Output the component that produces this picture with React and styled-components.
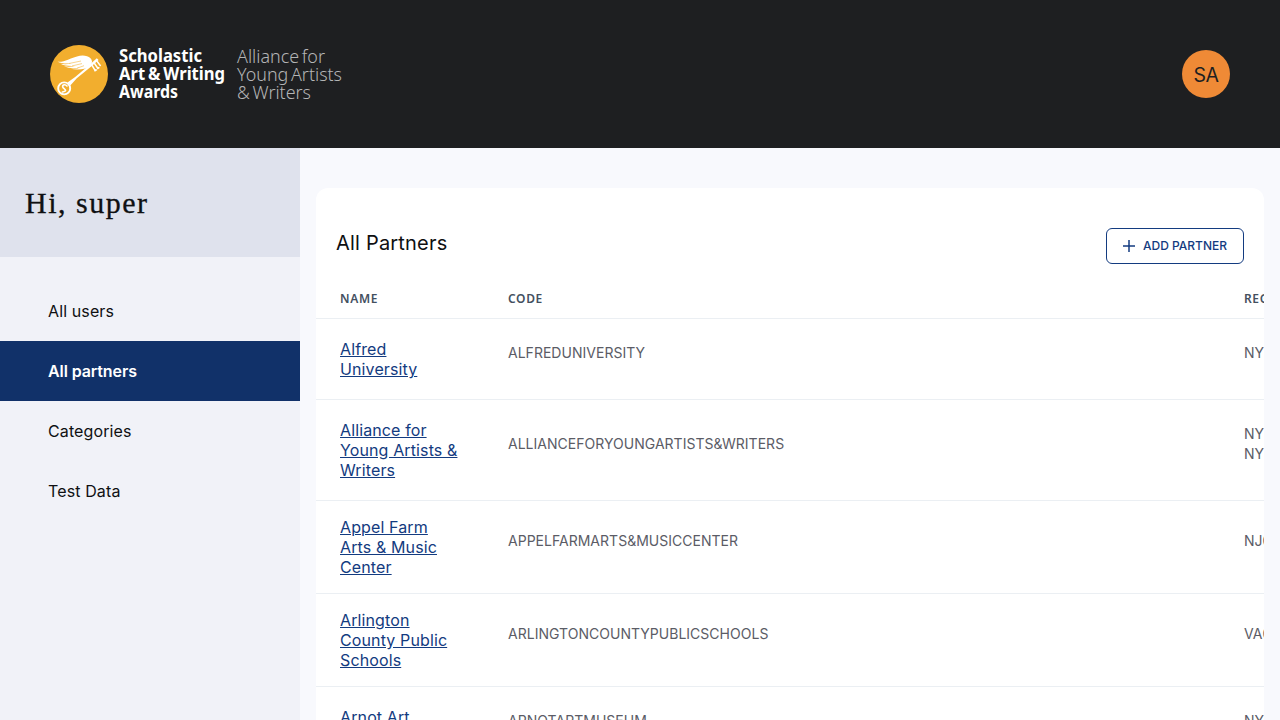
import React from 'react';
import styled, { createGlobalStyle } from 'styled-components';

const Global = createGlobalStyle`
  *, *::before, *::after { box-sizing: border-box; }
  html, body { margin: 0; height: 100%; overflow: hidden; background: #f8f9fd; }
  body { font-family: Inter, "Liberation Sans", sans-serif; color: #0f1012; }
`;

const Page = styled.div`
  height: 100vh;
  display: flex;
  flex-direction: column;
  overflow: hidden;
`;
const Header = styled.header`
  flex: 0 0 148px;
  display: flex;
  align-items: center;
  justify-content: space-between;
  padding: 0 50px;
  background: #1e1f21;
`;
const LogoArt = styled.svg`
  display: block;
`;
const Avatar = styled.div`
  width: 48px;
  height: 48px;
  border-radius: 50%;
  display: flex;
  align-items: center;
  justify-content: center;
  background: #ef8a36;
  color: #1e1f21;
  font-size: 19.5px;
  line-height: 20px;
  letter-spacing: -0.4px;
  padding-top: 1px;
`;
const Body = styled.div`
  flex: 1;
  min-height: 0;
  display: flex;
`;
const Sidebar = styled.aside`
  flex: 0 0 300px;
  background: #f1f2f8;
`;
const Greeting = styled.h1`
  margin: 0;
  height: 109px;
  padding: 1px 25px 0;
  display: flex;
  align-items: center;
  background: #dfe2ed;
  font-family: "Liberation Serif", serif;
  font-weight: 400;
  font-size: 30px;
  letter-spacing: 1.5px;
  -webkit-text-stroke: 0.3px #0f1012;
`;
const Nav = styled.nav`
  display: flex;
  flex-direction: column;
  padding-top: 24px;
`;
const NavItem = styled.a`
  height: 60px;
  padding-left: 48px;
  display: flex;
  align-items: center;
  font-size: 16px;
  letter-spacing: ${(p) => (p.$active ? '-0.1px' : '0.12px')};
  font-weight: ${(p) => (p.$active ? 600 : 400)};
  color: ${(p) => (p.$active ? '#fff' : '#0f1012')};
  background: ${(p) => (p.$active ? '#113169' : 'transparent')};
`;
const Main = styled.main`
  flex: 1;
  min-width: 0;
  padding: 40px 16px 0;
`;
const Card = styled.section`
  height: 100%;
  padding-top: 40px;
  border-radius: 12px 12px 0 0;
  background: #fff;
  overflow: hidden;
`;
const CardHead = styled.div`
  display: flex;
  justify-content: space-between;
  align-items: flex-start;
  height: 50px;
  padding: 0 20px;
`;
const Title = styled.h2`
  margin: 0;
  font-size: 20px;
  line-height: 30px;
  font-weight: 400;
  letter-spacing: 0.2px;
`;
const AddButton = styled.button`
  width: 138px;
  height: 36px;
  padding: 0;
  display: flex;
  align-items: center;
  justify-content: center;
  gap: 8px;
  border: 1px solid #133b80;
  border-radius: 6px;
  background: #fff;
  color: #133b80;
  font-family: inherit;
  font-size: 12px;
  font-weight: 500;
  white-space: nowrap;
`;
const AddLabel = styled.span`
  padding-bottom: 2px;
`;
const Table = styled.table`
  width: 1300px;
  table-layout: fixed;
  border-collapse: separate;
  border-spacing: 0;
`;
const Th = styled.th`
  width: ${(p) => p.$w}px;
  height: 41px;
  padding: 0 24px;
  text-align: left;
  border-bottom: 1px solid #ebeff3;
  font-family: "Noto Sans", sans-serif;
  font-size: 12px;
  font-weight: 600;
  letter-spacing: 0.65px;
  color: #44505f;
`;
const NameCell = styled.td`
  padding: 16px 24px;
  border-bottom: 1px solid #ebeff3;
  vertical-align: middle;
  font-size: 16px;
  line-height: 20px;
  letter-spacing: 0.12px;
`;
const Cell = styled.td`
  padding: 24px 24px 36px;
  border-bottom: 1px solid #ebeff3;
  vertical-align: middle;
  font-size: 14px;
  line-height: 20px;
  letter-spacing: 0.02px;
  color: #5b5c66;
`;
const PartnerLink = styled.a`
  display: block;
  color: #133b80;
  text-decoration: underline;
`;

const partners = [
  { name: ['Alfred', 'University'], code: 'ALFREDUNIVERSITY', regions: ['NY'] },
  { name: ['Alliance for', 'Young Artists &', 'Writers'], code: 'ALLIANCEFORYOUNGARTISTS&WRITERS', regions: ['NY', 'NY'] },
  { name: ['Appel Farm', 'Arts & Music', 'Center'], code: 'APPELFARMARTS&MUSICCENTER', regions: ['NJ0'] },
  { name: ['Arlington', 'County Public', 'Schools'], code: 'ARLINGTONCOUNTYPUBLICSCHOOLS', regions: ['VA0'] },
  { name: ['Arnot Art', 'Museum'], code: 'ARNOTARTMUSEUM', regions: ['NY'] },
];

const Logo = () => (
  <LogoArt width="294" height="58" viewBox="0 0 294 58">
    <circle cx="29" cy="29" r="29" fill="#f2ae2e" />
    <path fill="#fff" d="M17.5 37.5 L25.5 31.8 L40.2 19.2 L46.8 13.2 L48.6 15.1 L41.8 21.1 L26.8 33.2 L20.3 40.5 Z" />
    <circle cx="14.2" cy="43.4" r="6" fill="#f2ae2e" stroke="#fff" strokeWidth="1.9" />
    <path d="M17 41 C14.6 38.4 11.2 40.6 13.3 42.8 C15.5 44.7 17.3 46 12.5 47" fill="none" stroke="#fff" strokeWidth="1.7" strokeLinecap="round" />
    <path d="M41.8 20 L45.4 25.8 M44.2 18 L48 23.5 M46.6 15.6 L50.6 21 M44.4 26.2 L46.8 24.6 M47.2 23.9 L49.4 22.4" fill="none" stroke="#fff" strokeWidth="1.5" />
    <path fill="#fff" d="M7.5 16.8 C15 17.4 20 13 27 11.5 C32 9.8 37.5 10.3 40.5 13.3 C43 16 42.3 19.5 39 21.5 C36 23.8 29 25.7 20.5 23.8 C25 24 28 23.4 30 22.6 C24 23.7 18 23.2 14 21.3 C18 22 22 21.7 25 20.9 C19 21.4 13.5 20.5 10.5 18.8 C14.5 19.4 18 19.2 21.5 18.4 C15.5 18.9 10.5 18.4 7.5 16.8Z" />
    <path d="M19 18.5 L31 16 M22 20.9 L32 18.6 M27 23.2 L34 20.7" stroke="#f2ae2e" strokeWidth=".55" />
    <g fill="#fff" fontFamily="Noto Sans, sans-serif" fontWeight="700" fontSize="18" wordSpacing="-1.5">
      <text x="69" y="17" textLength="83" lengthAdjust="spacingAndGlyphs">Scholastic</text>
      <text x="69" y="35" textLength="106" lengthAdjust="spacingAndGlyphs">Art &amp; Writing</text>
      <text x="69" y="53" textLength="59" lengthAdjust="spacingAndGlyphs">Awards</text>
    </g>
    <g fill="#b4b5b6" fontFamily="Noto Sans, sans-serif" fontWeight="300" fontSize="18" wordSpacing="-2">
      <text x="187" y="17.5" textLength="88" lengthAdjust="spacingAndGlyphs">Alliance for</text>
      <text x="187" y="35.5" textLength="105" lengthAdjust="spacingAndGlyphs">Young Artists</text>
      <text x="187" y="53.5" textLength="74" lengthAdjust="spacingAndGlyphs">&amp; Writers</text>
    </g>
  </LogoArt>
);

const PlusIcon = () => (
  <svg width="12" height="12" viewBox="0 0 12 12">
    <path d="M6 0v12M0 6h12" stroke="#133b80" strokeWidth="1.5" />
  </svg>
);

export default function App() {
  return (
    <Page>
      <Global />
      <Header>
        <Logo />
        <Avatar>SA</Avatar>
      </Header>
      <Body>
        <Sidebar>
          <Greeting>Hi, super</Greeting>
          <Nav>
            <NavItem>All users</NavItem>
            <NavItem $active>All partners</NavItem>
            <NavItem>Categories</NavItem>
            <NavItem>Test Data</NavItem>
          </Nav>
        </Sidebar>
        <Main>
          <Card>
            <CardHead>
              <Title>All Partners</Title>
              <AddButton><PlusIcon /><AddLabel>ADD PARTNER</AddLabel></AddButton>
            </CardHead>
            <Table>
              <thead>
                <tr>
                  <Th $w={168}>NAME</Th>
                  <Th $w={736}>CODE</Th>
                  <Th $w={396}>REGION</Th>
                </tr>
              </thead>
              <tbody>
                {partners.map((p) => (
                  <tr key={p.code}>
                    <NameCell>
                      {p.name.map((line) => <PartnerLink key={line}>{line}</PartnerLink>)}
                    </NameCell>
                    <Cell>{p.code}</Cell>
                    <Cell>{p.regions.map((r, i) => <div key={i}>{r}</div>)}</Cell>
                  </tr>
                ))}
              </tbody>
            </Table>
          </Card>
        </Main>
      </Body>
    </Page>
  );
}
